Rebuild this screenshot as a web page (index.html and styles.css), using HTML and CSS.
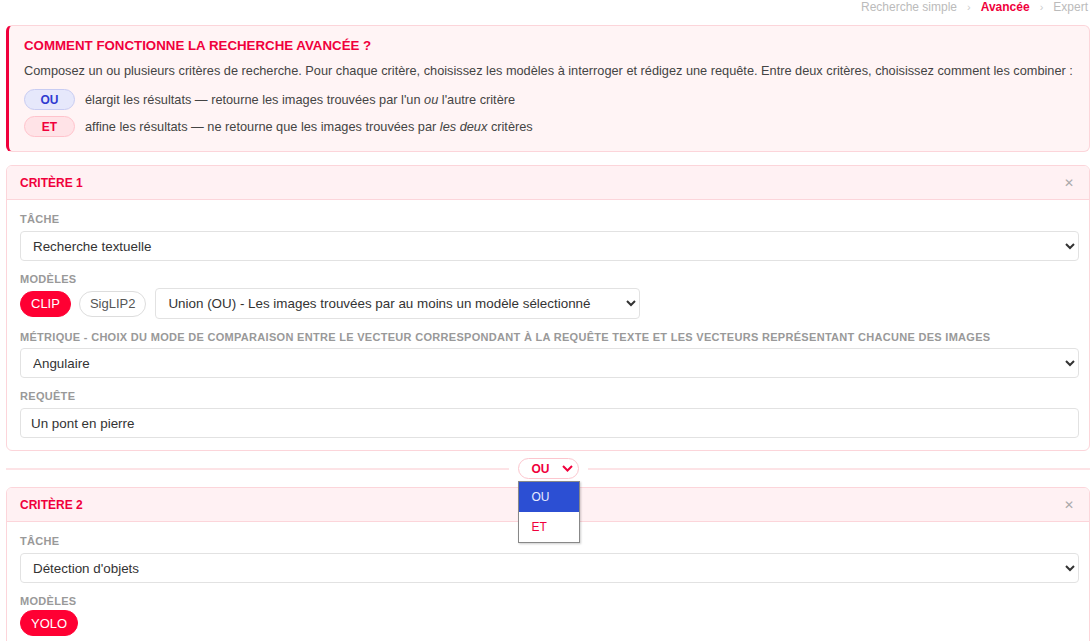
FILE: index.html
```html
<!DOCTYPE html>
<html lang="fr">
<head>
  <meta charset="UTF-8" />
  <title>Recherche avancée</title>
  <link rel="stylesheet" href="styles.css">
</head>
<body>
  <div class="page">
    <nav class="crumbs">
      <span>Recherche simple</span>
      <span class="sep">›</span>
      <span class="active">Avancée</span>
      <span class="sep">›</span>
      <span>Expert</span>
    </nav>

    <div class="help">
      <h3>Comment fonctionne la recherche avancée ?</h3>
      <p>Composez un ou plusieurs critères de recherche. Pour chaque critère, choisissez les modèles à interroger et rédigez une requête. Entre deux critères, choisissez comment les combiner :</p>
      <div class="help-row">
        <span class="op op-ou">OU</span>
        <span>élargit les résultats — retourne les images trouvées par l'un <em>ou</em> l'autre critère</span>
      </div>
      <div class="help-row">
        <span class="op op-et">ET</span>
        <span>affine les résultats — ne retourne que les images trouvées par <em>les deux</em> critères</span>
      </div>
    </div>

    <div class="card">
      <div class="card-head">
        <span>Critère 1</span>
        <span class="close">✕</span>
      </div>
      <div class="card-body">
        <label>Tâche</label>
        <select class="field"><option>Recherche textuelle</option></select>

        <label class="tight">Modèles</label>
        <div class="models">
          <span class="model on">CLIP</span>
          <span class="model">SigLIP2</span>
          <select class="field union"><option>Union (OU) - Les images trouvées par au moins un modèle sélectionné</option></select>
        </div>

        <label class="metric">Métrique - choix du mode de comparaison entre le vecteur correspondant à la requête texte et les vecteurs représentant chacune des images</label>
        <select class="field"><option>Angulaire</option></select>

        <label>Requête</label>
        <input class="field last" type="text" value="Un pont en pierre" />
      </div>
    </div>

    <div class="joiner">
      <div class="line"></div>
      <div class="combo">
        <div class="combo-btn">OU
          <svg width="11" height="7" viewBox="0 0 11 7"><path d="M1 1l4.5 4.5L10 1" fill="none" stroke="#f0003c" stroke-width="2"/></svg>
        </div>
        <div class="combo-list">
          <div class="opt sel">OU</div>
          <div class="opt">ET</div>
        </div>
      </div>
      <div class="line"></div>
    </div>

    <div class="card">
      <div class="card-head">
        <span>Critère 2</span>
        <span class="close">✕</span>
      </div>
      <div class="card-body">
        <label>Tâche</label>
        <select class="field"><option>Détection d'objets</option></select>

        <label class="tight">Modèles</label>
        <div class="models">
          <span class="model on">YOLO</span>
        </div>
      </div>
    </div>
  </div>
</body>
</html>
```

FILE: styles.css
```css
body {
  margin: 0;
  background: #fff;
  font-family: "Liberation Sans", Arial, sans-serif;
  color: #333;
}
.page {
  padding: 0 1px 0 6px;
}
.crumbs {
  display: flex;
  justify-content: flex-end;
  gap: 10px;
  height: 14px;
  padding: 0 2px 11px 0;
  font-size: 12px;
  line-height: 14px;
  color: #bbb;
}
.crumbs .sep {
  color: #ccc;
  font-size: 11px;
}
.crumbs .active {
  color: #f0003c;
  font-weight: bold;
}

.help {
  background: #fff4f5;
  border: 1px solid #fcd5da;
  border-left: 3px solid #f0003c;
  border-radius: 6px;
  padding: 13px 16px 14px 15px;
  margin-bottom: 13px;
}
.help h3 {
  margin: 0 0 11px;
  font-size: 13.3px;
  line-height: 14px;
  color: #f0003c;
  text-transform: uppercase;
}
.help p {
  margin: 0 0 11px;
  font-size: 12.75px;
  line-height: 14px;
  color: #444;
}
.help-row {
  display: flex;
  align-items: center;
  gap: 10px;
  font-size: 12.75px;
  color: #444;
  margin-bottom: 6px;
}
.help-row:last-child {
  margin-bottom: 0;
}
.op {
  box-sizing: border-box;
  width: 51px;
  height: 21px;
  border-radius: 11px;
  display: flex;
  align-items: center;
  justify-content: center;
  font-weight: bold;
  font-size: 12px;
}
.op-ou {
  background: #e6e8fb;
  border: 1px solid #c8ccf2;
  color: #2e3bd0;
}
.op-et {
  background: #ffe3e7;
  border: 1px solid #ffc3cc;
  color: #f0003c;
}

.card {
  border: 1px solid #fcd5da;
  border-radius: 6px;
  overflow: hidden;
}
.card-head {
  display: flex;
  justify-content: space-between;
  align-items: center;
  height: 33px;
  padding: 0 15px 0 13px;
  background: #fff1f3;
  border-bottom: 1px solid #fcd5da;
  color: #f0003c;
  font-weight: bold;
  font-size: 12px;
  text-transform: uppercase;
}
.card-head .close {
  color: #aaa;
  font-weight: normal;
  font-size: 12px;
}
.card-body {
  padding: 12px 10px 12px 13px;
  display: flex;
  flex-direction: column;
}
.card-body label {
  font-size: 11px;
  line-height: 14px;
  font-weight: bold;
  color: #999;
  text-transform: uppercase;
  letter-spacing: 0.3px;
  margin-bottom: 5px;
}
.card-body label.tight {
  margin-bottom: 2px;
}
.card-body label.metric {
  margin-bottom: 4px;
}
.field {
  box-sizing: border-box;
  height: 30px;
  border: 1px solid #e2e2e2;
  border-radius: 4px;
  background: #fff;
  font-family: "Liberation Sans", Arial, sans-serif;
  font-size: 13.4px;
  color: #333;
  padding: 0 8px 0 8px;
  margin-bottom: 11px;
}
.field.last {
  margin-bottom: 0;
  padding-left: 10px;
}
.models {
  display: flex;
  align-items: center;
  gap: 8px;
  margin-bottom: 11px;
}
.models .union {
  width: 485px;
  margin: 0 0 0 1px;
  height: 31px;
}
.model {
  box-sizing: border-box;
  height: 26px;
  padding: 0 10px;
  border-radius: 13px;
  border: 1px solid #ddd;
  display: flex;
  align-items: center;
  font-size: 13px;
  color: #555;
}
.model.on {
  background: #ff0033;
  border-color: #ff0033;
  color: #fff;
}

.joiner {
  display: flex;
  align-items: center;
  gap: 9px;
  padding: 7px 0 8px;
}
.line {
  flex: 1;
  height: 2px;
  background: #fde3e6;
}
.combo {
  position: relative;
}
.combo-btn {
  box-sizing: border-box;
  width: 61px;
  height: 21px;
  padding-left: 13px;
  border: 1px solid #fcc6ce;
  border-radius: 11px;
  background: #fff;
  display: flex;
  align-items: center;
  gap: 12px;
  color: #f0003c;
  font-weight: bold;
  font-size: 12px;
}
.combo-list {
  position: absolute;
  top: 23px;
  left: 0;
  width: 60px;
  background: #fff;
  border: 1px solid #888;
  box-shadow: 1px 1px 2px rgba(0,0,0,0.2);
  z-index: 2;
}
.opt {
  height: 30px;
  line-height: 30px;
  padding-left: 13px;
  font-size: 12px;
  color: #f0003c;
}
.opt.sel {
  background: #2c4fd3;
  color: #e8ecff;
}
```
